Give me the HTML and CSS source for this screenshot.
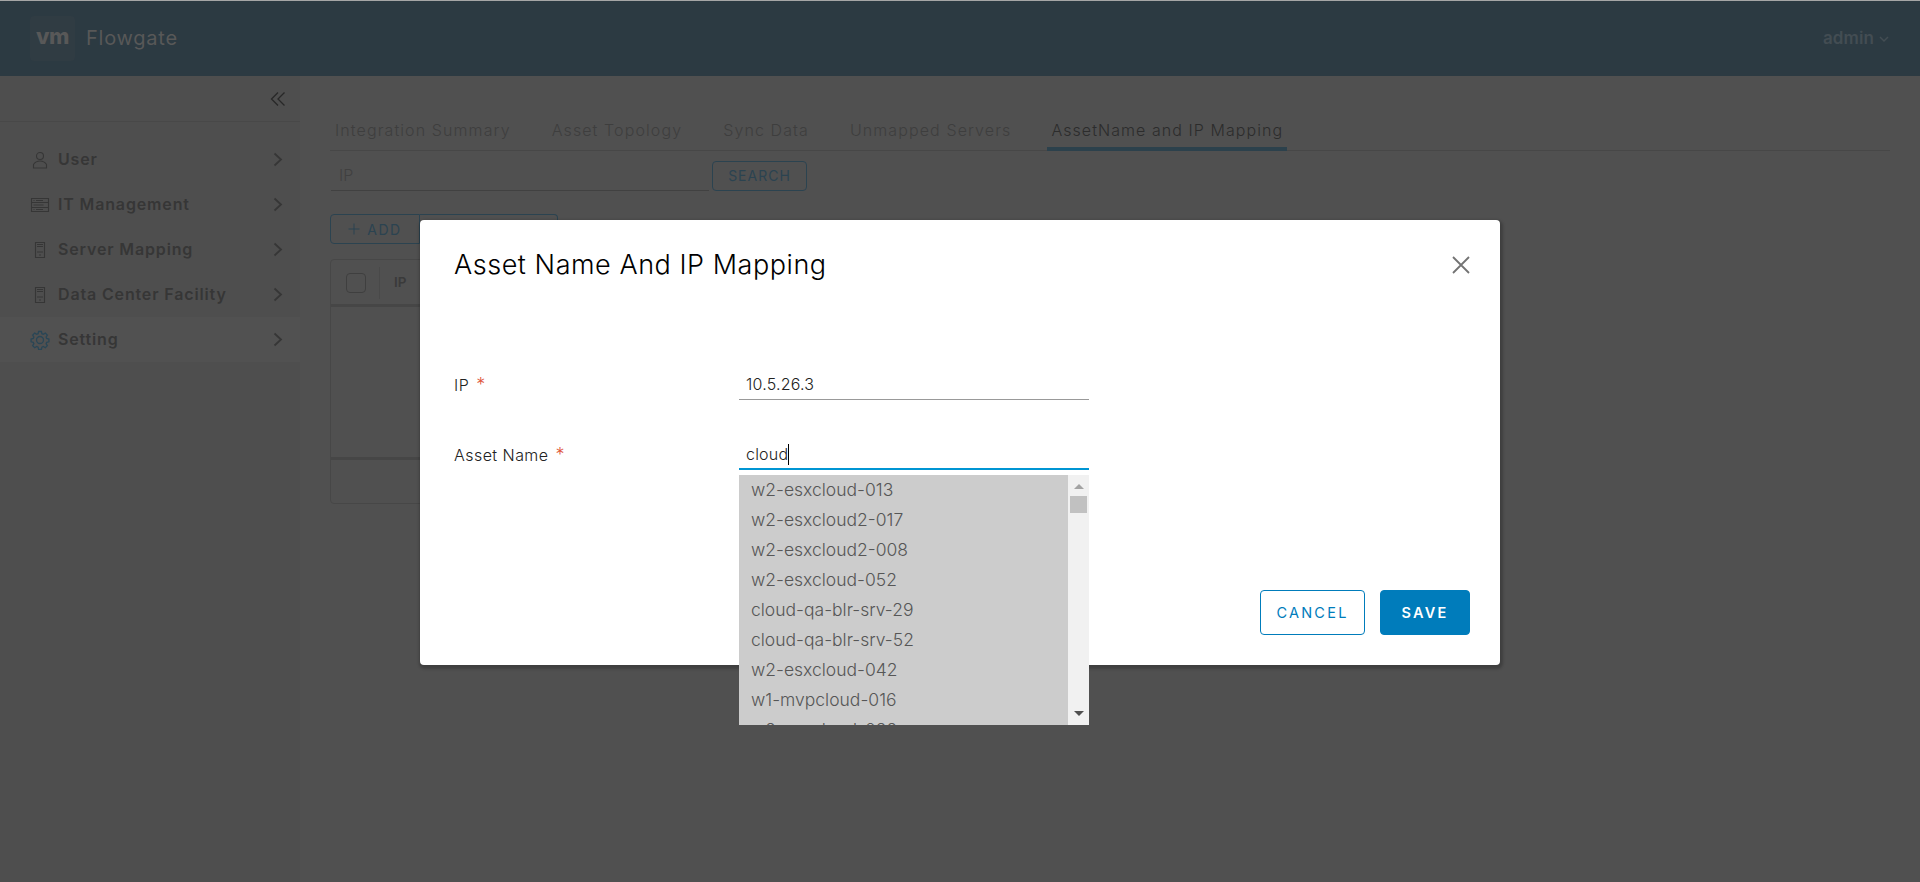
FILE: index.html
```
<!DOCTYPE html>
<html lang="en">
<head>
<meta charset="utf-8">
<title>Flowgate</title>
<link rel="stylesheet" href="styles.css">
</head>
<body>
<div class="app">
  <header class="header">
    <div class="brand">
      <span class="logo">vm</span>
      <span class="product">Flowgate</span>
    </div>
    <div class="account">admin
      <svg width="10" height="7" viewBox="0 0 10 7"><path d="M1 1l4 4 4-4"/></svg>
    </div>
  </header>
  <div class="body">
    <nav class="sidebar">
      <div class="collapse">
        <svg width="16" height="16" viewBox="0 0 16 16"><path d="M8 1.500L1.500 8 8 14.500M14.500 1.500L8 8l6.500 6.500"/></svg>
      </div>
      <ul class="menu">
        <li class="item">
          <svg class="icon" width="20" height="20" viewBox="0 0 20 20"><circle cx="10" cy="6" r="3.500"/><path d="M3.500 18v-3.500c1.500-2.300 4-3.500 6.500-3.500s5 1.200 6.500 3.500V18z"/></svg>
          <span class="label">User</span>
          <svg class="chev" width="10" height="15" viewBox="0 0 10 15"><path d="M1.500 1.500l6.500 6-6.500 6"/></svg>
        </li>
        <li class="item">
          <svg class="icon" width="20" height="20" viewBox="0 0 20 20"><path d="M1.500 3.500h17v13h-17zM1.500 7.500h17M1.500 12.500h17M3.500 5.500h1M6 5.500h7M3.500 10h10M3.500 14.500h1M6 14.500h7"/></svg>
          <span class="label">IT Management</span>
          <svg class="chev" width="10" height="15" viewBox="0 0 10 15"><path d="M1.500 1.500l6.500 6-6.500 6"/></svg>
        </li>
        <li class="item">
          <svg class="icon" width="20" height="20" viewBox="0 0 20 20"><path d="M5.500 2.500h9v15h-9zM7 4.500h6M7 6.500h6M7 12h6M9 15h2"/></svg>
          <span class="label">Server Mapping</span>
          <svg class="chev" width="10" height="15" viewBox="0 0 10 15"><path d="M1.500 1.500l6.500 6-6.500 6"/></svg>
        </li>
        <li class="item">
          <svg class="icon" width="20" height="20" viewBox="0 0 20 20"><path d="M5.500 2.500h9v15h-9zM7 4.500h6M7 6.500h6M7 12h6M9 15h2"/></svg>
          <span class="label">Data Center Facility</span>
          <svg class="chev" width="10" height="15" viewBox="0 0 10 15"><path d="M1.500 1.500l6.500 6-6.500 6"/></svg>
        </li>
        <li class="item active">
          <svg class="icon" width="20" height="20" viewBox="0 0 20 20"><circle cx="10" cy="10" r="3.500"/><path d="M8.600 1.500h2.800l.5 2.200 1.400.6 2-1.200 2 2-1.200 2 .6 1.400 2.200.5v2.800l-2.200.5-.6 1.400 1.200 2-2 2-2-1.200-1.400.6-.5 2.200H8.600l-.5-2.200-1.400-.6-2 1.200-2-2 1.200-2-.6-1.400-2.200-.5V9l2.200-.5.6-1.400-1.200-2 2-2 2 1.200 1.400-.6z"/></svg>
          <span class="label">Setting</span>
          <svg class="chev" width="10" height="15" viewBox="0 0 10 15"><path d="M1.500 1.500l6.500 6-6.500 6"/></svg>
        </li>
      </ul>
    </nav>
    <main class="content">
      <div class="tabs">
        <span class="tab">Integration Summary</span>
        <span class="tab">Asset Topology</span>
        <span class="tab">Sync Data</span>
        <span class="tab">Unmapped Servers</span>
        <span class="tab current">AssetName and IP Mapping</span>
      </div>
      <div class="search">
        <div class="query">IP</div>
        <div class="btn-sm find">SEARCH</div>
      </div>
      <div class="actions">
        <div class="btn-sm add"><svg width="12" height="12" viewBox="0 0 12 12"><path d="M6 .5v11M.5 6h11"/></svg>ADD</div>
        <div class="btn-sm more"></div>
      </div>
      <div class="grid">
        <div class="grid-head"><span class="check"></span><span class="col">IP</span></div>
        <div class="grid-body"></div>
        <div class="grid-foot"></div>
      </div>
    </main>
  </div>
</div>

<div class="overlay">
  <section class="modal">
    <div class="modal-head">
      <h3 class="title">Asset Name And IP Mapping</h3>
      <svg class="close" width="18" height="18" viewBox="0 0 18 18"><path d="M1 1l16 16M17 1L1 17"/></svg>
    </div>
    <div class="form">
      <div class="row">
        <label class="name">IP<span class="req">*</span></label>
        <div class="field ip">10.5.26.3</div>
      </div>
      <div class="row">
        <label class="name">Asset Name<span class="req">*</span></label>
        <div class="field asset focus">cloud<span class="caret"></span>
          <div class="dropdown">
            <div class="options">
              <div class="opt">w2-esxcloud-013</div>
              <div class="opt">w2-esxcloud2-017</div>
              <div class="opt">w2-esxcloud2-008</div>
              <div class="opt">w2-esxcloud-052</div>
              <div class="opt">cloud-qa-blr-srv-29</div>
              <div class="opt">cloud-qa-blr-srv-52</div>
              <div class="opt">w2-esxcloud-042</div>
              <div class="opt">w1-mvpcloud-016</div>
              <div class="opt">w2-esxcloud-032</div>
            </div>
            <div class="scroll">
              <span class="up"></span><span class="thumb"></span><span class="down"></span>
            </div>
          </div>
        </div>
      </div>
    </div>
    <div class="modal-foot">
      <div class="btn cancel">CANCEL</div>
      <div class="btn save">SAVE</div>
    </div>
  </section>
</div>
</body>
</html>
```
FILE: styles.css
```
* { box-sizing: border-box; }
body {
  margin: 0;
  height: 882px;
  overflow: hidden;
  background: #505050;
  font-family: Inter, "Open Sans", sans-serif;
  font-weight: 300;
  font-size: 16px;
  white-space: nowrap;
}
svg { display: block; fill: none; stroke: currentColor; flex: none; }

.app { display: flex; flex-direction: column; height: 882px; border-top: 1px solid #a6a6a6; }
.header {
  display: flex;
  justify-content: space-between;
  align-items: center;
  height: 75px;
  padding: 0 31px 0 30px;
  background: #2c3a42;
}
.brand { display: flex; align-items: center; gap: 11px; color: #585858; }
.logo {
  width: 45px;
  height: 45px;
  border-radius: 4px;
  background: #303c43;
  font-size: 22px;
  font-weight: 800;
  line-height: 41px;
  text-align: center;
  letter-spacing: -0.5px;
}
.product { padding-bottom: 1px; font-size: 20px; font-weight: 400; letter-spacing: .75px; }
.account { display: flex; align-items: center; gap: 5px; padding-bottom: 1px; font-size: 17px; font-weight: 600; letter-spacing: .1px; color: #434d53; }
.account svg { stroke-width: 1.5; margin-top: 2px; }

.body { display: flex; flex: 1; }
.sidebar { width: 300px; background: #4e4e4e; color: #363636; }
.collapse {
  display: flex;
  justify-content: flex-end;
  align-items: center;
  height: 46px;
  padding-right: 14px;
  border-bottom: 1px solid #484848;
  color: #282828;
}
.collapse svg { stroke-width: 1.3; }
.menu { margin: 0; padding: 15px 0 0; list-style: none; }
.item { display: flex; align-items: center; height: 45px; padding: 0 17px 0 30px; font-weight: 600; letter-spacing: .85px; }
.item.active { background: #515151; }
.icon { color: #363636; stroke-width: 1.1; }
.active .icon { color: #294656; stroke-width: 1.3; }
.label { flex: 1; margin-left: 8px; padding-bottom: 2px; }
.chev { stroke-width: 1.8; }

.content { flex: 1; padding: 29px 30px 0; }
.tabs { display: flex; height: 46px; gap: 33px; padding-left: 1px; border-bottom: 1px solid #474747; color: #3e3e3e; }
.tab { height: 46px; padding: 0 4px; line-height: 50px; letter-spacing: 1.1px; }
.current { margin-left: -1px; color: #2c2c2c; border-bottom: 4px solid #2c414c; letter-spacing: 1.06px; }
.search { display: flex; gap: 3px; margin-top: 10px; }
.query { width: 378px; height: 30px; margin-left: 1px; padding-left: 8px; line-height: 29px; color: #404040; border-bottom: 1px solid #414141; }
.btn-sm {
  display: flex;
  align-items: center;
  justify-content: center;
  height: 30px;
  border: 1px solid #2b4350;
  border-radius: 4px;
  color: #2b4350;
  font-size: 13.5px;
  font-weight: 400;
  letter-spacing: 1.3px;
}
.find { width: 95px; padding-bottom: 1px; font-size: 14px; letter-spacing: 1px; }
.actions { display: flex; margin-top: 23px; }
.add { width: 90px; gap: 7px; font-size: 14px; letter-spacing: 1.6px; border-radius: 4px 0 0 4px; }
.more { width: 138px; border-left: 0; border-radius: 0 4px 4px 0; }
.grid { width: 1150px; height: 245px; margin-top: 15px; border: 1px solid #474747; border-radius: 4px; }
.grid-head { display: flex; align-items: center; height: 47px; padding: 1px 0 0 15px; border-bottom: 3px solid #464646; }
.check { width: 20px; height: 20px; border: 1px solid #3f3f3f; border-radius: 4px; }
.col { height: 32px; margin-left: 13px; padding-left: 14px; border-left: 1px solid #494949; font-size: 13.5px; font-weight: 600; line-height: 31px; color: #3a3a3a; }
.grid-body { height: 153px; border-bottom: 3px solid #464646; }
.grid-foot { height: 43px; }

.overlay { position: absolute; inset: 0; }
.modal {
  width: 1080px;
  height: 445px;
  margin: 220px 0 0 420px;
  padding: 30px 30px 0 34px;
  background: #fff;
  border-radius: 4px;
  box-shadow: 1px 2px 3px 2px rgba(0, 0, 0, .22);
}
.modal-head { display: flex; justify-content: space-between; height: 90px; }
.title { margin: 0; font-size: 27px; font-weight: 300; line-height: 30px; letter-spacing: .54px; color: #000; }
.close { margin-top: 6px; color: #737373; stroke-width: 1.8; }
.form { height: 250px; }
.row { display: flex; height: 70px; }
.name { width: 285px; padding-top: 30px; line-height: 30px; letter-spacing: .45px; color: #222; }
.req { margin-left: 7px; color: #e0573c; font-size: 18px; line-height: 20px; }
.field {
  position: relative;
  display: flex;
  align-items: center;
  width: 350px;
  height: 30px;
  margin-top: 30px;
  padding-left: 7px;
  border-bottom: 1px solid #999;
  letter-spacing: .2px;
  color: #222;
}
.ip { padding-bottom: 1px; }
.focus { border-bottom: 2px solid #0095d3; }
.caret { width: 1px; height: 21px; background: #000; }
.dropdown { position: absolute; left: 0; top: 35px; display: flex; width: 350px; height: 250px; overflow: hidden; }
.options { flex: 1; background: #ccc; color: #565656; }
.opt { height: 30px; padding-left: 12px; font-size: 17.5px; line-height: 30px; letter-spacing: 0; }
.scroll { display: flex; flex-direction: column; align-items: center; width: 21px; padding: 9px 0; background: #f1f1f1; }
.up { border: 5px solid transparent; border-top: 0; border-bottom-color: #a3a3a3; }
.thumb { width: 17px; height: 17px; margin-top: 7px; background: #c1c1c1; }
.down { margin-top: auto; border: 5px solid transparent; border-bottom: 0; border-top-color: #505050; }
.modal-foot { display: flex; justify-content: flex-end; gap: 15px; }
.btn { height: 45px; border: 1px solid #007cbb; border-radius: 4px; font-size: 14.5px; line-height: 44px; text-align: center; letter-spacing: 2.25px; }
.cancel { width: 105px; color: #007cbb; font-weight: 400; }
.save { width: 90px; color: #fff; background: #007cbb; font-weight: 600; }
```
